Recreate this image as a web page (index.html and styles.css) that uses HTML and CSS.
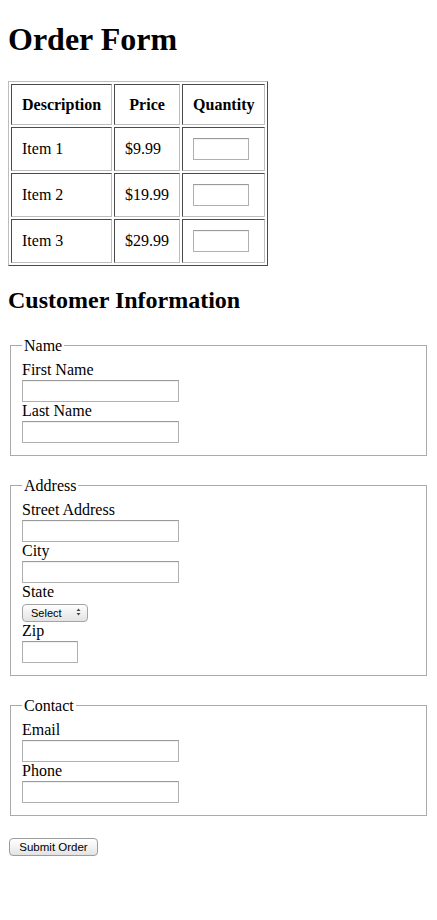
FILE: index.html
```html
<!DOCTYPE html>
<html lang="en">
<head>
<meta charset="utf-8">
<title>Order Form</title>
<link rel="stylesheet" href="styles.css">
</head>
<body>
<h1 class="page-title">Order Form</h1>
<form class="order-form">
  <table class="order-table">
    <thead>
      <tr><th>Description</th><th>Price</th><th>Quantity</th></tr>
    </thead>
    <tbody>
      <tr><td>Item 1</td><td>$9.99</td><td><input class="qty" type="text"></td></tr>
      <tr><td>Item 2</td><td>$19.99</td><td><input class="qty" type="text"></td></tr>
      <tr><td>Item 3</td><td>$29.99</td><td><input class="qty" type="text"></td></tr>
    </tbody>
  </table>

  <h2 class="section-title">Customer Information</h2>

  <fieldset class="group">
    <legend class="group-legend">Name</legend>
    <label class="field-label" for="fn">First Name</label>
    <input class="text-input" id="fn" type="text">
    <label class="field-label" for="ln">Last Name</label>
    <input class="text-input" id="ln" type="text">
  </fieldset>

  <fieldset class="group">
    <legend class="group-legend">Address</legend>
    <label class="field-label" for="st">Street Address</label>
    <input class="text-input" id="st" type="text">
    <label class="field-label" for="city">City</label>
    <input class="text-input" id="city" type="text">
    <label class="field-label" for="state">State</label>
    <div class="select-wrap">
      <select class="select" id="state">
        <option>Select</option>
      </select>
      <svg class="select-arrows" width="5" height="8" viewBox="0 0 5 8" aria-hidden="true">
        <path d="M2.5 0.5 L4.5 3 L0.5 3 Z" fill="#444"/>
        <path d="M2.5 7.5 L4.5 5 L0.5 5 Z" fill="#444"/>
      </svg>
    </div>
    <label class="field-label" for="zip">Zip</label>
    <input class="text-input zip" id="zip" type="text">
  </fieldset>

  <fieldset class="group">
    <legend class="group-legend">Contact</legend>
    <label class="field-label" for="em">Email</label>
    <input class="text-input" id="em" type="text">
    <label class="field-label" for="ph">Phone</label>
    <input class="text-input" id="ph" type="text">
  </fieldset>

  <button class="submit" type="submit">Submit Order</button>
</form>
</body>
</html>
```
FILE: styles.css
```css
body {
  margin: 8px;
  font-family: "Liberation Serif", "Times New Roman", serif;
  font-size: 16px;
  color: #000;
  background: #fff;
}

.page-title {
  font-size: 32px;
  line-height: 37px;
  font-weight: bold;
  margin: 13px 0 23px;
}

.order-form {
  margin: 0;
}

.order-table {
  border-collapse: separate;
  border-spacing: 2px;
  border: 1px solid;
  border-color: #bdbdbd #4a4a4a #4a4a4a #bdbdbd;
}

.order-table th,
.order-table td {
  border: 1px solid;
  border-color: #4a4a4a #bdbdbd #bdbdbd #4a4a4a;
  padding: 10px;
}

.order-table th {
  line-height: 19px;
  text-align: center;
  font-weight: bold;
}

.order-table td {
  line-height: 22px;
  text-align: left;
}

.qty {
  display: inline-block;
  vertical-align: top;
  box-sizing: border-box;
  width: 56px;
  height: 22px;
  margin: 0;
  padding: 0 2px;
  border: 1px solid #b0b0b0;
  border-top-color: #9a9a9a;
  box-shadow: inset 0 1px 1px rgba(0, 0, 0, 0.06);
  font: 13px "Liberation Sans", sans-serif;
}

.section-title {
  font-size: 24px;
  line-height: 28px;
  font-weight: bold;
  margin: 20px 0 22px;
}

.group {
  margin: 0 2px;
  padding: 6px 11px 12px;
  border: 1px solid #aaa;
  min-width: 0;
}

.group + .group {
  margin-top: 20px;
}

.group-legend {
  padding: 0 2px;
  line-height: 19px;
}

.field-label {
  display: block;
  line-height: 18px;
}

.text-input {
  display: block;
  box-sizing: border-box;
  width: 157px;
  height: 22px;
  margin: 1px 0 0;
  padding: 0 2px;
  border: 1px solid #b0b0b0;
  border-top-color: #9a9a9a;
  box-shadow: inset 0 1px 1px rgba(0, 0, 0, 0.06);
  font: 13px "Liberation Sans", sans-serif;
}

.text-input.zip {
  width: 56px;
}

.select-wrap {
  position: relative;
  width: 66px;
  height: 18px;
  margin: 2px 0 1px;
}

.select {
  -webkit-appearance: none;
  appearance: none;
  box-sizing: border-box;
  width: 66px;
  height: 18px;
  margin: 0;
  padding: 0 0 0 8px;
  border: 1px solid #a4a4a4;
  border-radius: 4px;
  background: linear-gradient(#ffffff, #f0f0f0 50%, #e4e4e4);
  font: 11px "Liberation Sans", Arial, sans-serif;
  color: #000;
  line-height: 16px;
}

.select-arrows {
  position: absolute;
  right: 7px;
  top: 5px;
  pointer-events: none;
}

.submit {
  display: block;
  box-sizing: border-box;
  width: 89px;
  height: 18px;
  margin: 22px 0 0 1px;
  padding: 0;
  border: 1px solid #9c9c9c;
  border-radius: 4px;
  background: linear-gradient(#ffffff, #f3f3f3 50%, #e2e2e2);
  font: 11.5px "Liberation Sans", Arial, sans-serif;
  color: #000;
  line-height: 16px;
}
```
